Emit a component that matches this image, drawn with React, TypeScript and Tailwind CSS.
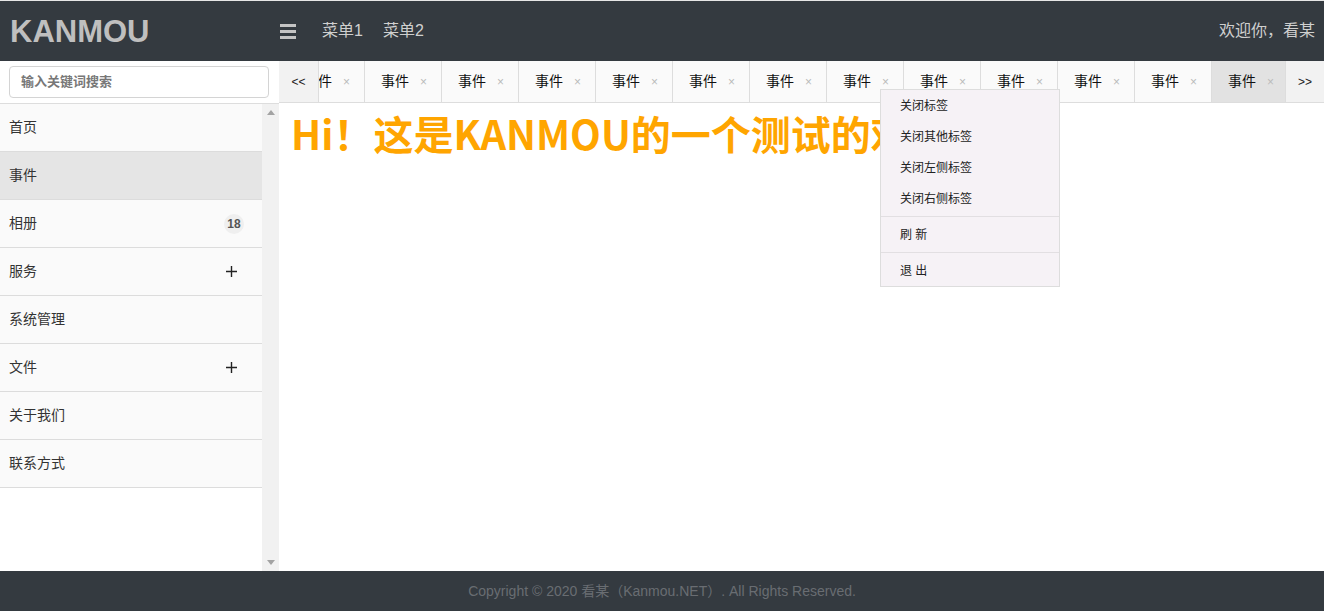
import { Fragment } from "react";

const font = "font-['Liberation_Sans','Noto_Sans_CJK_SC',sans-serif]";

const menu = [
  { name: "首页" },
  { name: "事件", active: true },
  { name: "相册", badge: "18" },
  { name: "服务", plus: true },
  { name: "系统管理" },
  { name: "文件", plus: true },
  { name: "关于我们" },
  { name: "联系方式" },
];

const tabs = Array.from({ length: 13 }, (_, i) => ({ title: "事件", active: i === 12 }));

const PlusIcon = () => (
  <svg width="11" height="11" viewBox="0 0 11 11">
    <path d="M5.5 0v11M0 5.5h11" stroke="#222" strokeWidth="1.4" />
  </svg>
);

export default function App() {
  return (
    <div className={`${font} h-screen flex flex-col bg-white text-[#333]`}>
      {/* header */}
      <header className="h-[61px] border-t border-[#e6e6e6] bg-[#343a40] flex items-center shrink-0">
        <div className="w-[279px] pl-[10px] text-[31px] font-bold text-[#bfbfbf] leading-none">KANMOU</div>
        <div className="ml-[1px] flex flex-col gap-[3px] w-[16px]">
          <span className="h-[3px] bg-[#c4c4c4]" />
          <span className="h-[3px] bg-[#c4c4c4]" />
          <span className="h-[3px] bg-[#c4c4c4]" />
        </div>
        <nav className="ml-[26px] flex gap-[20px] text-[16px] text-[#cfcfcf]">
          <span>菜单1</span>
          <span>菜单2</span>
        </nav>
        <div className="ml-auto pr-[9px] text-[16px] text-[#cfcfcf]">欢迎你，看某</div>
      </header>

      <div className="flex-1 flex min-h-0">
        {/* sidebar */}
        <aside className="w-[279px] flex flex-col shrink-0">
          <div className="h-[43px] border-b border-[#ddd] flex items-center pl-[9px]">
            <div className="w-[260px] h-[32px] border border-[#d4d4d4] rounded-[4px] flex items-center pl-[11px] text-[13px] font-bold text-[#777]">
              输入关键词搜索
            </div>
          </div>
          <div className="flex-1 flex min-h-0">
            <ul className="w-[262px]">
              {menu.map((m) => (
                <li
                  key={m.name}
                  className={`h-[48px] border-b border-[#dcdcdc] flex items-center pl-[9px] pr-[18px] text-[14px] ${
                    m.active ? "bg-[#e5e5e5]" : "bg-[#fafafa]"
                  }`}
                >
                  <span>{m.name}</span>
                  {m.badge && (
                    <span className="ml-auto w-[20px] h-[20px] rounded-full bg-[#efefef] flex items-center justify-center text-[12px] font-bold text-[#555]">
                      {m.badge}
                    </span>
                  )}
                  {m.plus && (
                    <span className="ml-auto mr-[7px] flex">
                      <PlusIcon />
                    </span>
                  )}
                </li>
              ))}
            </ul>
            <div className="w-[17px] bg-[#f1f1f1] flex flex-col items-center justify-between py-[6px]">
              <svg width="8" height="5" viewBox="0 0 8 5">
                <path d="M0 5L4 0L8 5Z" fill="#a3a3a3" />
              </svg>
              <svg width="8" height="5" viewBox="0 0 8 5">
                <path d="M0 0L4 5L8 0Z" fill="#a3a3a3" />
              </svg>
            </div>
          </div>
        </aside>

        {/* main */}
        <main className="flex-1 flex flex-col min-w-0 relative">
          <div className="h-[42px] border-b border-[#ddd] bg-[#fafafa] flex shrink-0 text-[14px]">
            <button className="w-[40px] bg-[#f2f2f2] border-r border-[#ddd] text-[12px] text-[#222]">&lt;&lt;</button>
            <div className="flex-1 overflow-hidden">
              <div className="flex ml-[-31px] h-full">
                {tabs.map((t, i) => (
                  <div
                    key={i}
                    className={`w-[77px] shrink-0 border-r border-[#ddd] flex items-center pl-[16px] ${
                      t.active ? "bg-[#e2e2e2]" : ""
                    }`}
                  >
                    <span className="text-[#111]">{t.title}</span>
                    <span className="ml-[11px] text-[12px] text-[#bbb]">×</span>
                  </div>
                ))}
              </div>
            </div>
            <button className="w-[39px] bg-[#f2f2f2] border-l border-[#ddd] text-[12px] text-[#222]">&gt;&gt;</button>
          </div>

          <div className="flex-1 pl-[12px] pt-[4px]">
            <h1 className="font-['Noto_Sans_CJK_SC',sans-serif] text-[40px] font-bold text-[#ffa500] leading-[52px]">
              Hi！这是KANMOU的一个测试的欢迎页
            </h1>
          </div>

          {/* context menu */}
          <div className="absolute left-[601px] top-[28px] w-[180px] bg-[#f6f2f6] border border-[#ddd] text-[12px] text-[#222]">
            {[
              ["关闭标签", "关闭其他标签", "关闭左侧标签", "关闭右侧标签"],
              ["刷 新"],
              ["退 出"],
            ].map((group, gi) => (
              <Fragment key={gi}>
                {gi > 0 && <div className="my-[2px] h-px bg-[#e2dfe2]" />}
                {group.map((label) => (
                  <div key={label} className="h-[31px] flex items-center pl-[19px]">
                    {label}
                  </div>
                ))}
              </Fragment>
            ))}
          </div>
        </main>
      </div>

      <footer className="h-[40px] bg-[#343a40] flex items-center justify-center text-[14px] text-[#696d72] shrink-0">
        Copyright © 2020 看某（Kanmou.NET）. All Rights Reserved.
      </footer>
    </div>
  );
}
